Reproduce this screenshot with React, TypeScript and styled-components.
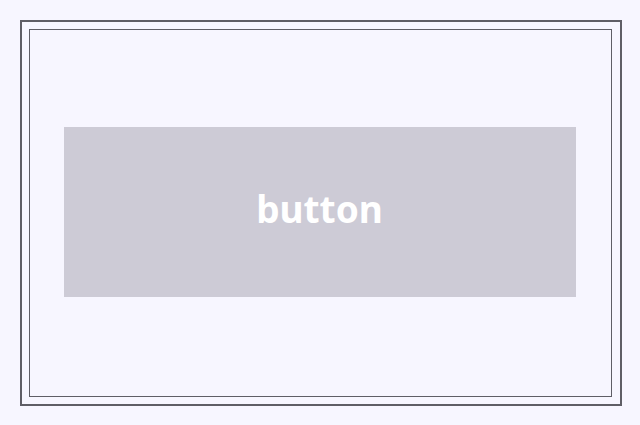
import { FC } from 'react';
import styled, { createGlobalStyle } from 'styled-components';

const GlobalS = createGlobalStyle`
  html, body {
    margin: 0;
    padding: 0;
    background: #f7f6ff;
  }
`

const Frame = styled.div`
  box-sizing: border-box;
  margin: 20px 0 0 20px;
  width: 602px;
  height: 386px;
  border: 2px solid #5f5e66;
  padding: 7px 8px 7px 7px;
  display: flex;
`

const Inner = styled.div`
  flex: 1;
  border: 1px solid #5f5e66;
  padding: 0 2px 2px 0;
  display: flex;
  align-items: center;
  justify-content: center;
`

const Button = styled.button`
  width: 512px;
  height: 170px;
  border: none;
  background: #cdcbd6;
  color: #ffffff;
  font: 700 37px "Noto Sans", sans-serif;
  padding: 0 0 8px;
  cursor: pointer;
`

const App: FC = () => {
  return (
    <>
      <GlobalS />
      <Frame>
        <Inner>
          <Button>button</Button>
        </Inner>
      </Frame>
    </>
  )
}

export default App
